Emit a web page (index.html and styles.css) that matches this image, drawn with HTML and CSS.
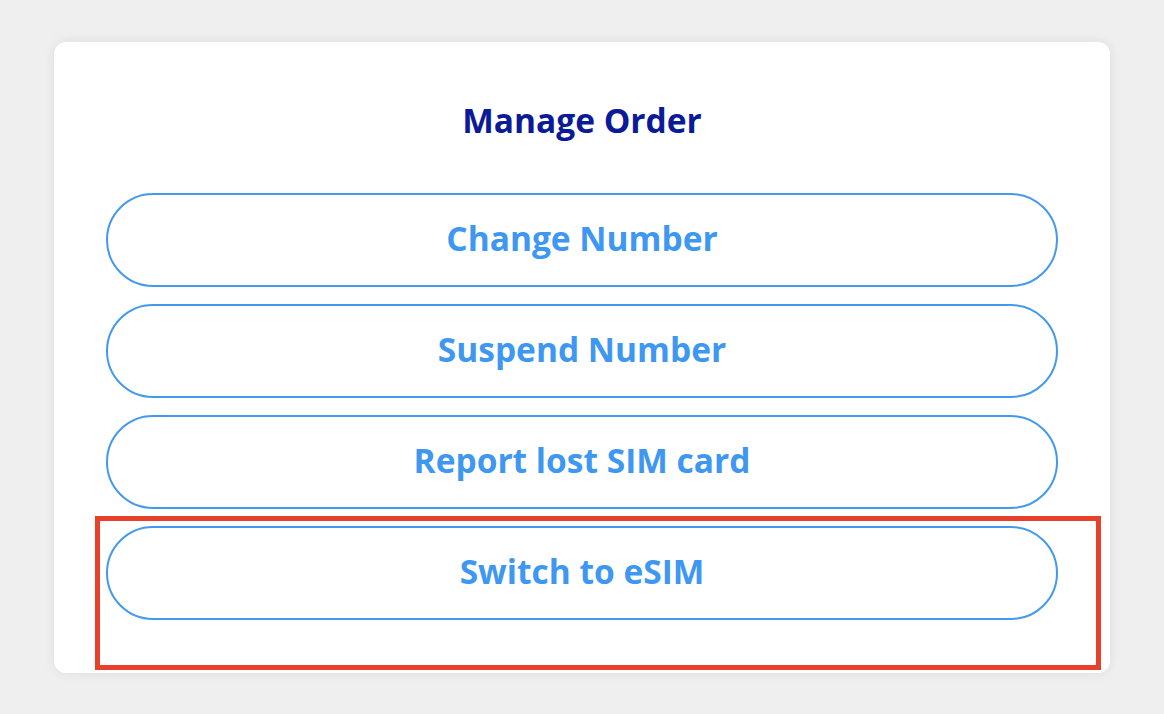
FILE: index.html
```html
<!DOCTYPE html>
<html>
<head>
<meta charset="utf-8">
<link rel="stylesheet" href="styles.css">
</head>
<body>
<div class="page">
  <div class="card">
    <h2 class="title">Manage Order</h2>
    <div class="actions">
      <button class="btn">Change Number</button>
      <button class="btn">Suspend Number</button>
      <button class="btn">Report lost SIM card</button>
      <div class="highlighted">
        <button class="btn">Switch to eSIM</button>
        <div class="annotation"></div>
      </div>
    </div>
  </div>
</div>
</body>
</html>
```
FILE: styles.css
```css
html, body {
  margin: 0;
  padding: 0;
  background: #efefef;
  font-family: "Open Sans", "Noto Sans", sans-serif;
}
.page {
  padding: 42px 54px 0 54px;
  height: 714px;
  box-sizing: border-box;
}
.card {
  background: #ffffff;
  border-radius: 12px;
  box-shadow: 0 0 12px rgba(0,0,0,0.08);
  height: 631px;
  box-sizing: border-box;
  padding: 56px 52px 0 52px;
}
.title {
  margin: 0;
  text-align: center;
  font-size: 33.5px;
  font-weight: 700;
  color: #0b1a97;
  line-height: 44px;
}
.actions {
  margin-top: 51px;
  display: flex;
  flex-direction: column;
  gap: 17px;
}
.btn {
  display: block;
  width: 100%;
  height: 94px;
  border: 2px solid #4399ee;
  border-radius: 47px;
  background: #ffffff;
  color: #3e97f1;
  font-family: "Open Sans", "Noto Sans", sans-serif;
  font-size: 33.5px;
  font-weight: 700;
  padding: 0 0 4px 0;
}
.highlighted {
  position: relative;
}
.annotation {
  position: absolute;
  left: -11px;
  right: -43px;
  top: -10px;
  height: 154px;
  border: 5px solid #e8412b;
  box-sizing: border-box;
}
```
